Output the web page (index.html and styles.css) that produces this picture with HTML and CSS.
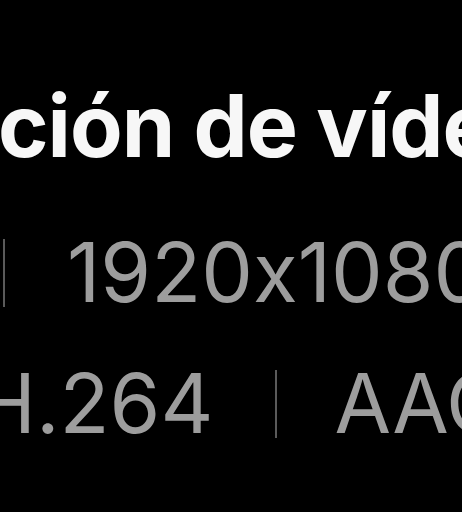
FILE: index.html
```html
<!DOCTYPE html>
<html lang="es">
<head>
<meta charset="utf-8">
<link rel="stylesheet" href="styles.css">
</head>
<body>
<div class="page">
  <h1 class="title">ción de vídeo</h1>
  <div class="meta meta-res"><span class="sep"></span><span class="val">1920x1080</span></div>
  <div class="meta meta-codec"><span class="val">H.264</span><span class="sep"></span><span class="val">AAC</span></div>
</div>
</body>
</html>
```
FILE: styles.css
```css
html, body {
  margin: 0;
  padding: 0;
  background: #000;
  overflow: hidden;
}
.page {
  width: 462px;
  height: 512px;
  overflow: hidden;
  font-family: Inter, "Noto Sans", sans-serif;
  font-feature-settings: "calt" 0;
  padding-top: 78px;
  box-sizing: border-box;
}
.title {
  margin: 0;
  font-size: 86px;
  line-height: 96px;
  font-weight: 700;
  letter-spacing: -1px;
  color: #f7f7f7;
  white-space: nowrap;
  margin-left: -2px;
}
.meta {
  display: flex;
  align-items: center;
  gap: 62px;
  font-size: 82px;
  line-height: 131px;
  font-weight: 400;
  color: #9d9d9d;
  white-space: nowrap;
}
.meta-res {
  margin-top: 33px;
  margin-left: 3px;
}
.meta-codec {
  margin-left: -25px;
}
.meta-codec .sep {
  margin-right: -5px;
}
.sep {
  flex: none;
  width: 2px;
  height: 68px;
  background: #5a5a5a;
}
```
